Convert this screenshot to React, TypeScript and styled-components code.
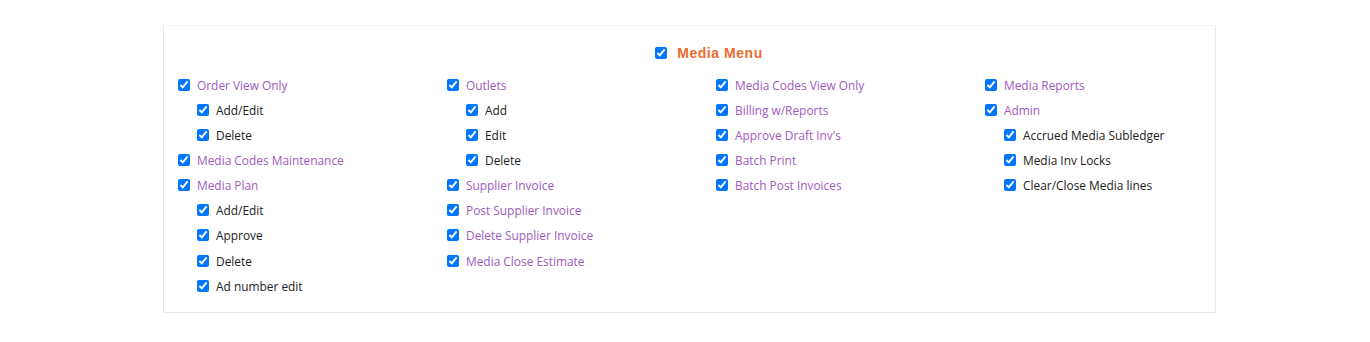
import React from "react";
import styled, { createGlobalStyle } from "styled-components";

const Global = createGlobalStyle`
  body { margin: 0; background: #fff; font-family: "Open Sans", "Liberation Sans", sans-serif; }
`;

const Page = styled.div`
  padding: 25px 0 0 163px;
`;

const Panel = styled.div`
  width: 1053px;
  height: 288px;
  box-sizing: border-box;
  border: 1px solid #e9e9e9;
  border-top-color: #f6f6f6;
  padding: 13px 15px 0 14px;
`;

const Header = styled.label`
  display: flex;
  align-items: center;
  justify-content: center;
  gap: 3px;
  height: 26px;
  padding-left: 40px;
  padding-top: 1px;
`;

const Title = styled.span`
  font-family: "Liberation Sans", Arial, sans-serif;
  font-weight: bold;
  font-size: 14px;
  letter-spacing: 0.55px;
  color: #ef6b2e;
`;

const Columns = styled.div`
  display: grid;
  grid-template-columns: repeat(4, 269px);
  margin-top: 6px;
`;

const Column = styled.div`
  display: flex;
  flex-direction: column;
`;

const Row = styled.label<{ $child?: boolean }>`
  display: flex;
  align-items: center;
  height: 25.15px;
  padding-left: ${(p) => (p.$child ? 19 : 0)}px;
  font-size: 11.9px;
  color: ${(p) => (p.$child ? "#222" : "#9d5bbd")};
`;

const Box = styled.input.attrs({ type: "checkbox", defaultChecked: true })`
  width: 12px;
  height: 12px;
  margin: 0 7px 0 0;
  accent-color: #0075ff;
`;

type Item = { label: string; child?: boolean };

const cols: Item[][] = [
  [
    { label: "Order View Only" },
    { label: "Add/Edit", child: true },
    { label: "Delete", child: true },
    { label: "Media Codes Maintenance" },
    { label: "Media Plan" },
    { label: "Add/Edit", child: true },
    { label: "Approve", child: true },
    { label: "Delete", child: true },
    { label: "Ad number edit", child: true },
  ],
  [
    { label: "Outlets" },
    { label: "Add", child: true },
    { label: "Edit", child: true },
    { label: "Delete", child: true },
    { label: "Supplier Invoice" },
    { label: "Post Supplier Invoice" },
    { label: "Delete Supplier Invoice" },
    { label: "Media Close Estimate" },
  ],
  [
    { label: "Media Codes View Only" },
    { label: "Billing w/Reports" },
    { label: "Approve Draft Inv's" },
    { label: "Batch Print" },
    { label: "Batch Post Invoices" },
  ],
  [
    { label: "Media Reports" },
    { label: "Admin" },
    { label: "Accrued Media Subledger", child: true },
    { label: "Media Inv Locks", child: true },
    { label: "Clear/Close Media lines", child: true },
  ],
];

export default function App() {
  return (
    <>
      <Global />
      <Page>
        <Panel>
          <Header>
            <Box />
            <Title>Media Menu</Title>
          </Header>
          <Columns>
            {cols.map((c, i) => (
              <Column key={i}>
                {c.map((it, j) => (
                  <Row key={j} $child={it.child}>
                    <Box />
                    {it.label}
                  </Row>
                ))}
              </Column>
            ))}
          </Columns>
        </Panel>
      </Page>
    </>
  );
}
